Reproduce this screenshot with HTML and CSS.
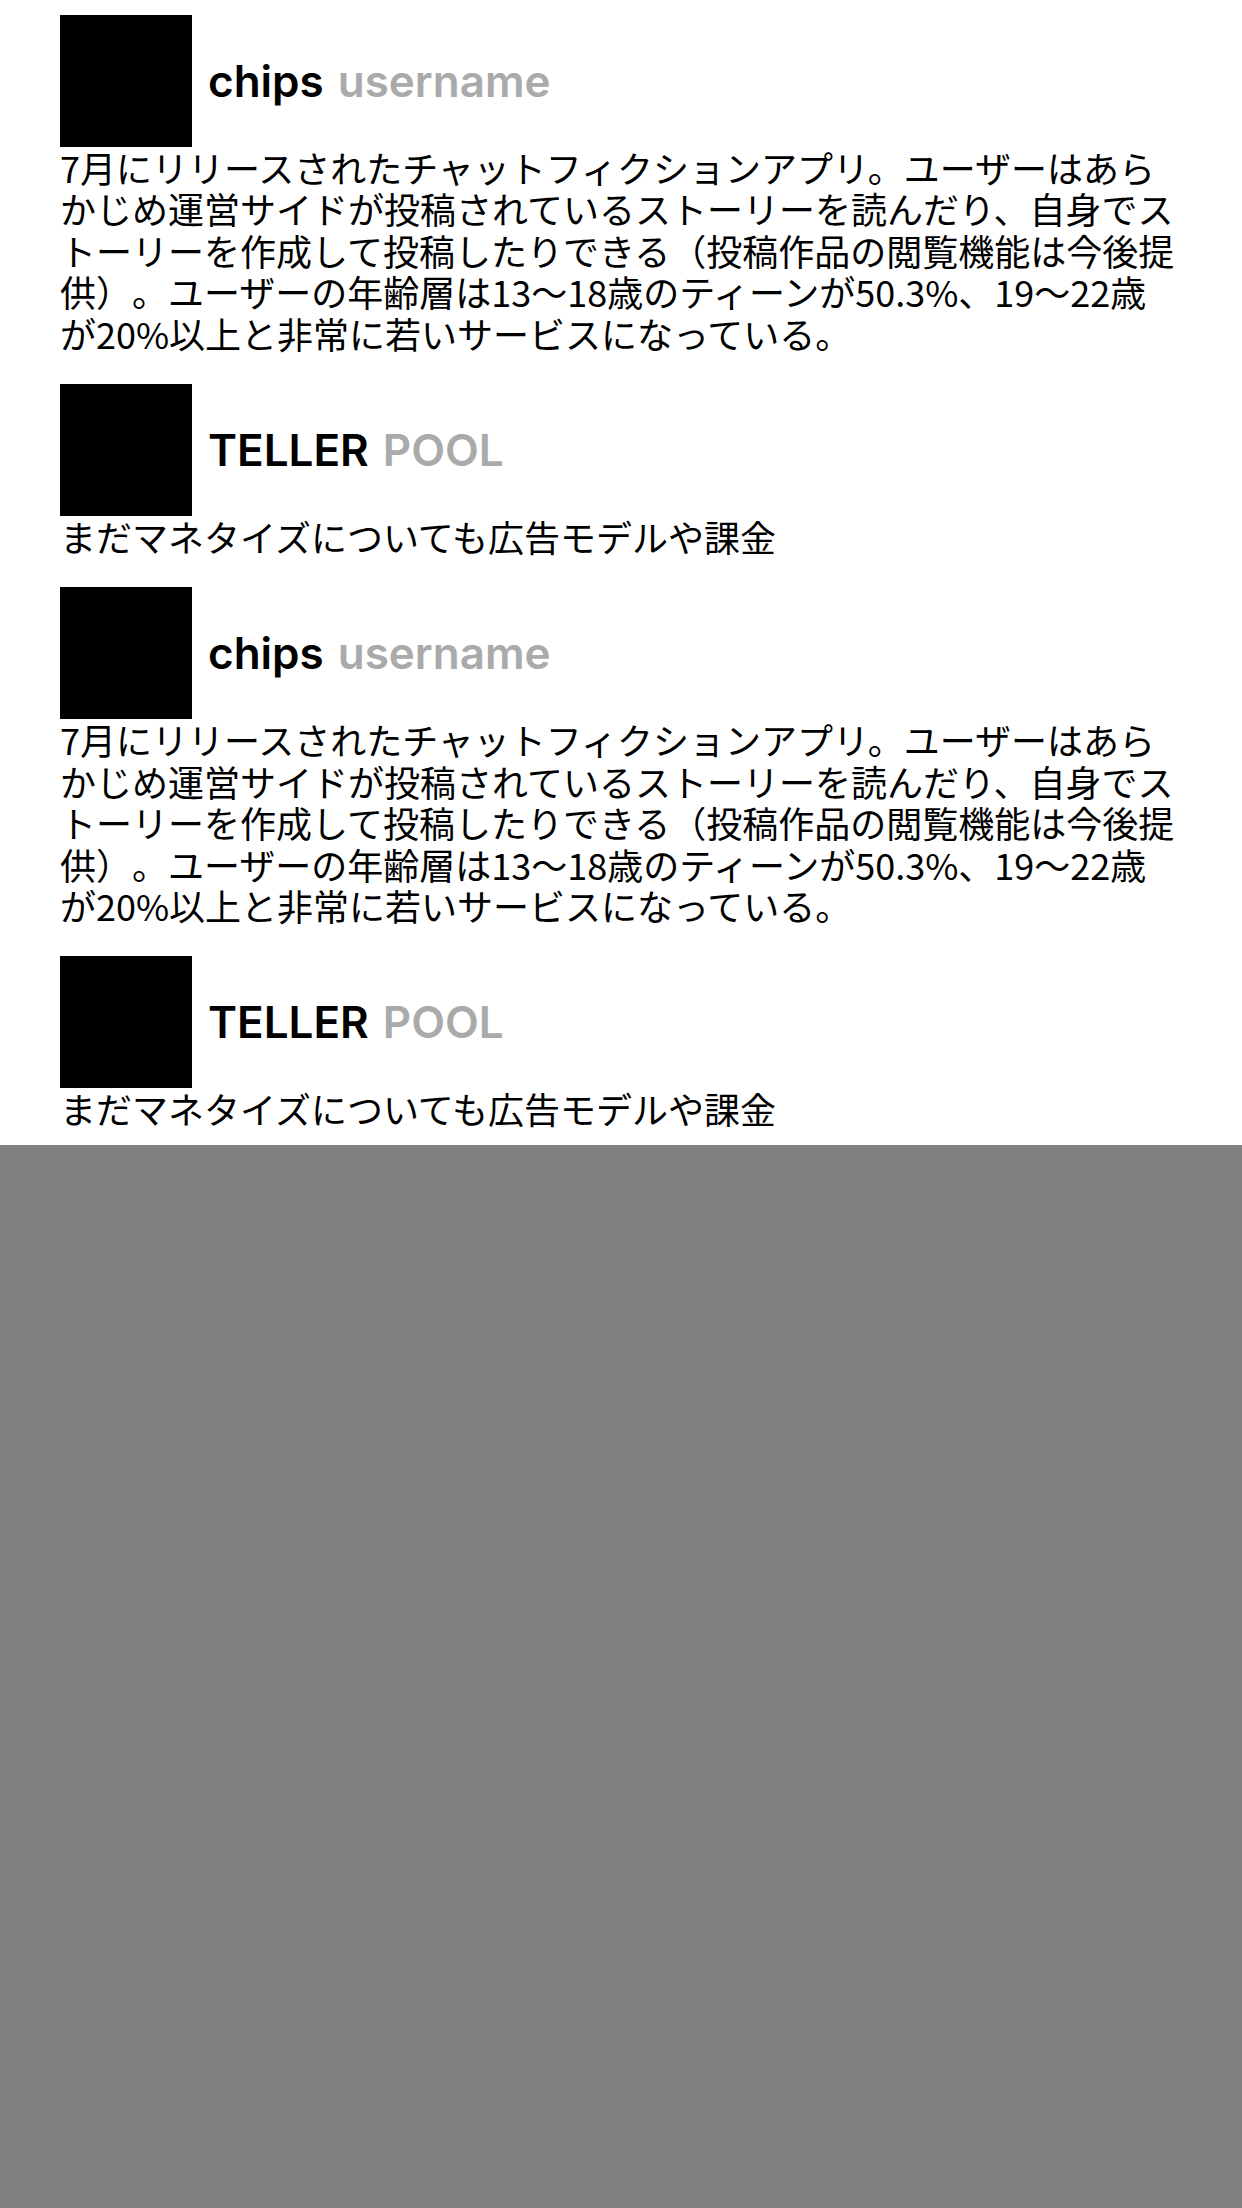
FILE: index.html
```html
<!DOCTYPE html>
<html lang="ja">
<head>
<meta charset="utf-8">
<title>Feed</title>
<link rel="stylesheet" href="styles.css">
</head>
<body>
<div class="page">
  <main class="feed">
    <article class="post">
      <header class="post-head">
        <div class="avatar"></div>
        <div class="names"><span class="name">chips</span><span class="handle">username</span></div>
      </header>
      <p class="body">7月にリリースされたチャットフィクションアプリ。ユーザーはあらかじめ運営サイドが投稿されているストーリーを読んだり、自身でストーリーを作成して投稿したりできる（投稿作品の閲覧機能は今後提供）。ユーザーの年齢層は13〜18歳のティーンが50.3%、19〜22歳が20%以上と非常に若いサービスになっている。</p>
    </article>
    <article class="post">
      <header class="post-head">
        <div class="avatar"></div>
        <div class="names"><span class="name">TELLER</span><span class="handle">POOL</span></div>
      </header>
      <p class="body">まだマネタイズについても広告モデルや課金</p>
    </article>
    <article class="post">
      <header class="post-head">
        <div class="avatar"></div>
        <div class="names"><span class="name">chips</span><span class="handle">username</span></div>
      </header>
      <p class="body">7月にリリースされたチャットフィクションアプリ。ユーザーはあらかじめ運営サイドが投稿されているストーリーを読んだり、自身でストーリーを作成して投稿したりできる（投稿作品の閲覧機能は今後提供）。ユーザーの年齢層は13〜18歳のティーンが50.3%、19〜22歳が20%以上と非常に若いサービスになっている。</p>
    </article>
    <article class="post">
      <header class="post-head">
        <div class="avatar"></div>
        <div class="names"><span class="name">TELLER</span><span class="handle">POOL</span></div>
      </header>
      <p class="body">まだマネタイズについても広告モデルや課金</p>
    </article>
  </main>
  <div class="backdrop"></div>
</div>
</body>
</html>
```

FILE: styles.css
```css
html, body {
  margin: 0;
  padding: 0;
}
body {
  background: #808080;
}
.page {
  min-height: 100vh;
  display: flex;
  flex-direction: column;
}
.feed {
  background: #ffffff;
  padding: 15px 60px 15px 60px;
  display: flex;
  flex-direction: column;
  gap: 30px;
}
.post {
  display: flex;
  flex-direction: column;
}
.post-head {
  display: flex;
  align-items: center;
  gap: 16px;
}
.avatar {
  width: 132px;
  height: 132px;
  background: #000000;
  flex: none;
}
.names {
  display: flex;
  align-items: baseline;
  gap: 14px;
  font-family: Inter, "Noto Sans", sans-serif;
  font-weight: 600;
  font-size: 44px;
  line-height: 1.2;
}
.name {
  color: #000000;
}
.handle {
  color: #aaaaaa;
}
.body {
  margin: 0;
  font-family: "Noto Sans CJK JP", "Noto Sans", sans-serif;
  font-size: 36px;
  line-height: 41.4px;
  color: #000000;
  max-width: 1122px;
  text-spacing-trim: space-all;
}
.backdrop {
  flex: 1;
  background: #808080;
}
```
